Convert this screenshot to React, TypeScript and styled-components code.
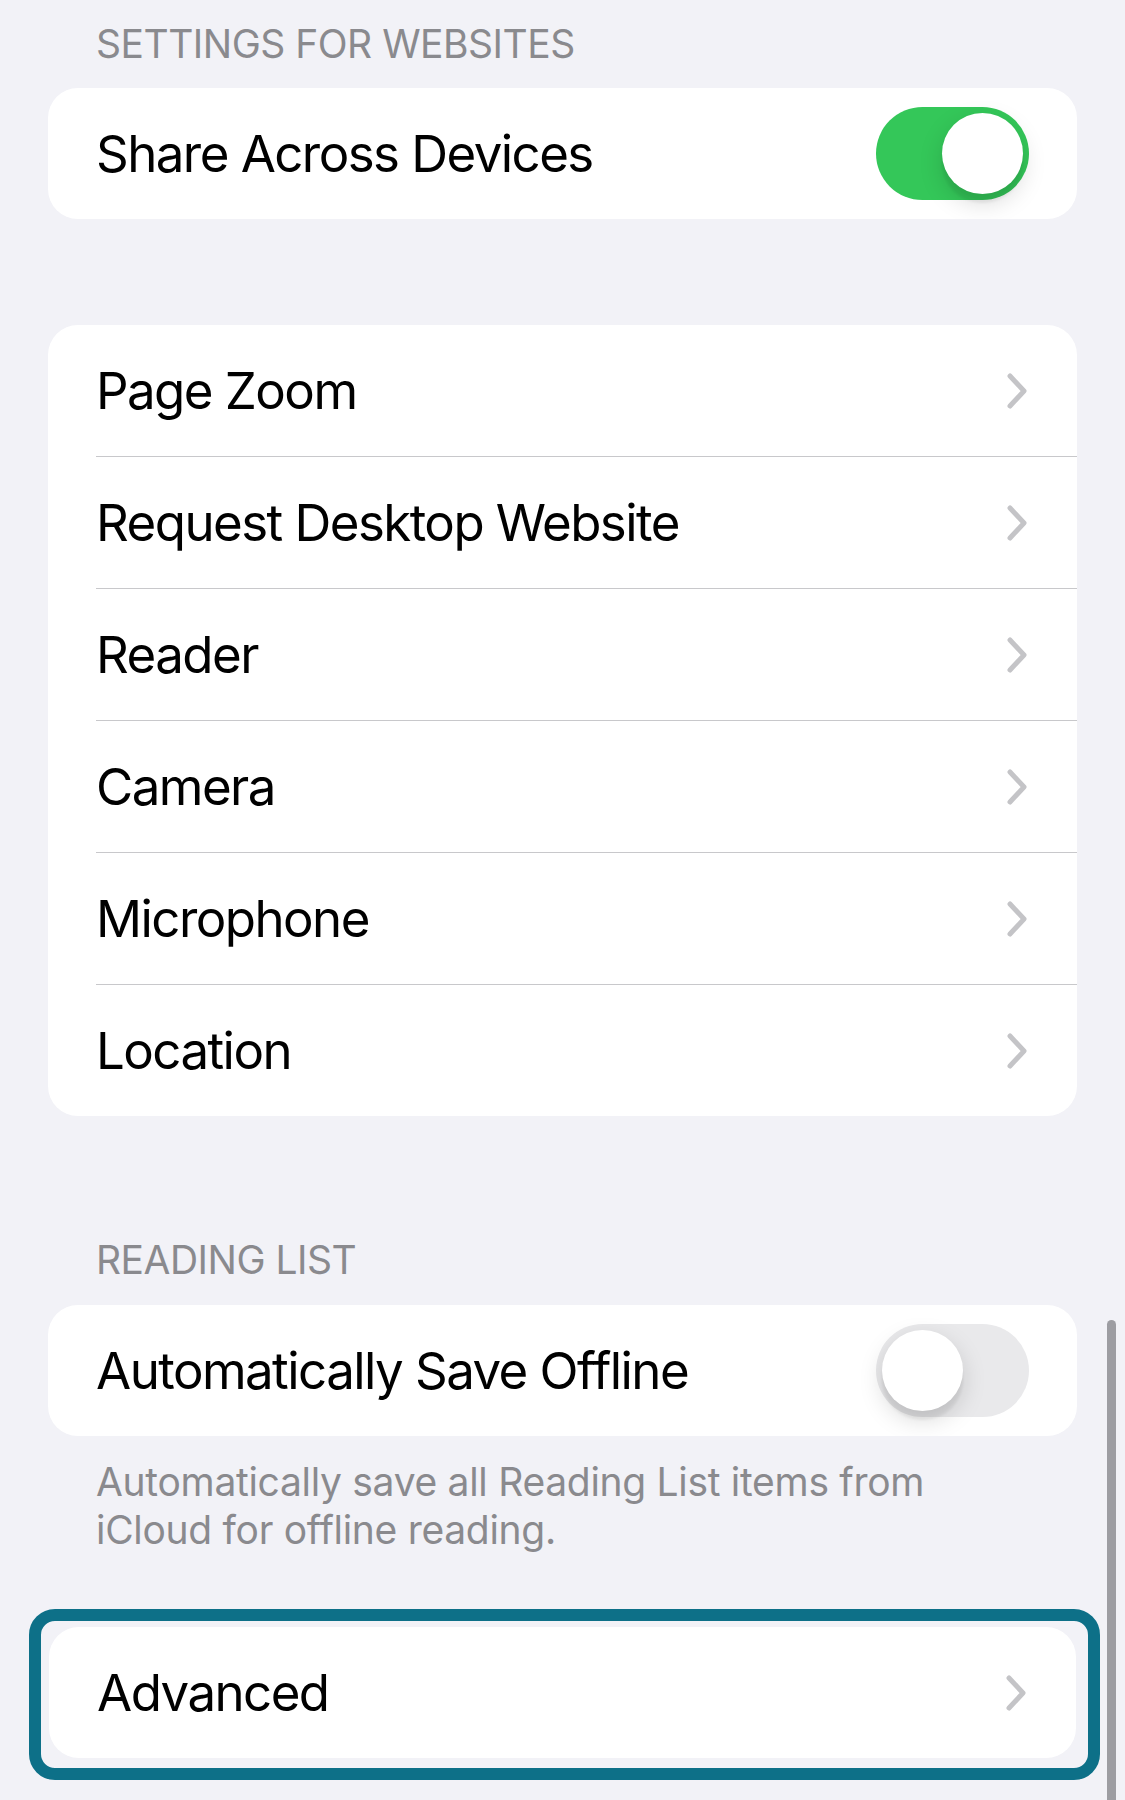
import React from "react";
import styled, { createGlobalStyle } from "styled-components";

const Global = createGlobalStyle`
  html, body {
    margin: 0;
    padding: 0;
    background: #f2f2f7;
  }
  body {
    font-family: Inter, "Noto Sans", "Liberation Sans", sans-serif;
    -webkit-font-smoothing: antialiased;
  }
`;

const Page = styled.div`
  position: relative;
  width: 1125px;
  min-height: 1800px;
  background: #f2f2f7;
  overflow: hidden;
  display: flex;
  flex-direction: column;
`;

const SectionHeader = styled.div<{ $top: number; $bottom: number }>`
  padding: ${(p) => p.$top}px 0 0 96px;
  margin-bottom: ${(p) => p.$bottom}px;
  font-size: 39px;
  line-height: 47px;
  color: #8a8a8e;
  letter-spacing: -0.5px;
  text-transform: uppercase;
`;

const Card = styled.div<{ $top?: number }>`
  margin: ${(p) => p.$top ?? 0}px 48px 0 48px;
  background: #ffffff;
  border-radius: 30px;
  overflow: hidden;
  display: flex;
  flex-direction: column;
`;

const Row = styled.div`
  display: flex;
  padding-left: 48px;
`;

const RowBody = styled.div<{ $sep: boolean }>`
  flex: 1;
  height: 131px;
  display: flex;
  align-items: center;
  justify-content: space-between;
  padding-right: 48px;
  border-bottom: ${(p) => (p.$sep ? "1px solid #c8c8cb" : "none")};
`;

const Label = styled.span`
  font-size: 51px;
  color: #000;
  letter-spacing: -1.55px;
  white-space: nowrap;
`;

const Footer = styled.div`
  padding: 22px 80px 0 96px;
  font-size: 39px;
  line-height: 48px;
  color: #8a8a8e;
  letter-spacing: -0.3px;
`;

const Track = styled.div<{ $on: boolean }>`
  width: 153px;
  height: 93px;
  border-radius: 47px;
  background: ${(p) => (p.$on ? "#34c759" : "#e9e9eb")};
  display: flex;
  align-items: center;
  justify-content: ${(p) => (p.$on ? "flex-end" : "flex-start")};
  padding: 0 6px;
  box-sizing: border-box;
`;

const Knob = styled.div`
  width: 81px;
  height: 81px;
  border-radius: 50%;
  background: #fff;
  box-shadow: 0 9px 24px rgba(0, 0, 0, 0.15), 0 9px 3px rgba(0, 0, 0, 0.06);
`;

const Highlight = styled.div`
  margin: 55px 25px 0 29px;
  border: 12px solid #0d7088;
  border-radius: 26px;
  padding: 6px 12px 10px 8px;
  display: flex;
  flex-direction: column;
`;

const InnerCard = styled.div`
  background: #ffffff;
  border-radius: 30px;
  display: flex;
  padding-left: 48px;
`;

const Scrollbar = styled.div`
  position: absolute;
  left: 1107px;
  top: 1320px;
  width: 9px;
  height: 520px;
  border-radius: 5px;
  background: #9d9da2;
`;

const Chevron = () => (
  <svg width="24" height="38" viewBox="0 0 24 38" aria-hidden>
    <path
      d="M5 4 L19 19 L5 34"
      fill="none"
      stroke="#c4c4c7"
      strokeWidth="5"
      strokeLinecap="round"
      strokeLinejoin="round"
    />
  </svg>
);

const Toggle = ({ on }: { on: boolean }) => (
  <Track $on={on}>
    <Knob />
  </Track>
);

const websiteRows = [
  "Page Zoom",
  "Request Desktop Website",
  "Reader",
  "Camera",
  "Microphone",
  "Location",
];

export default function App() {
  return (
    <Page>
      <Global />
      <SectionHeader $top={20} $bottom={21}>
        Settings for Websites
      </SectionHeader>
      <Card>
        <Row>
          <RowBody $sep={false}>
            <Label>Share Across Devices</Label>
            <Toggle on={true} />
          </RowBody>
        </Row>
      </Card>

      <Card $top={106}>
        {websiteRows.map((r, i) => (
          <Row key={r}>
            <RowBody $sep={i < websiteRows.length - 1}>
              <Label>{r}</Label>
              <Chevron />
            </RowBody>
          </Row>
        ))}
      </Card>

      <SectionHeader $top={120} $bottom={22}>
        Reading List
      </SectionHeader>
      <Card>
        <Row>
          <RowBody $sep={false}>
            <Label>Automatically Save Offline</Label>
            <Toggle on={false} />
          </RowBody>
        </Row>
      </Card>
      <Footer>
        Automatically save all Reading List items from
        <br />
        iCloud for offline reading.
      </Footer>

      <Highlight>
        <InnerCard>
          <RowBody $sep={false}>
            <Label>Advanced</Label>
            <Chevron />
          </RowBody>
        </InnerCard>
      </Highlight>
      <Scrollbar />
    </Page>
  );
}
